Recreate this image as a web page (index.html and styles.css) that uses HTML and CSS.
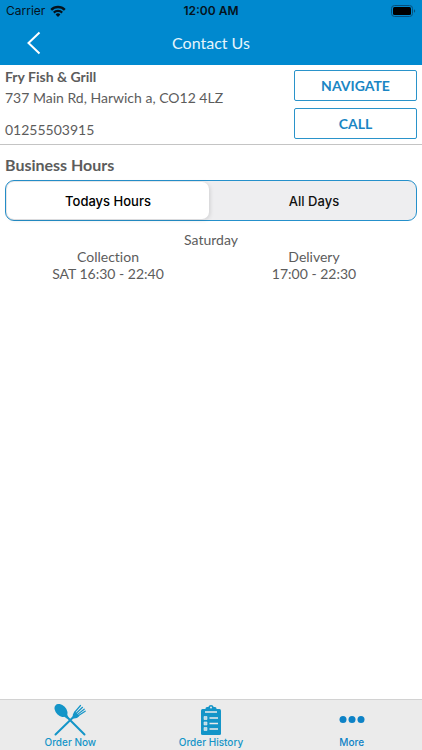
FILE: index.html
```html
<!DOCTYPE html>
<html lang="en">
<head>
<meta charset="utf-8">
<meta name="viewport" content="width=device-width, initial-scale=1">
<title>Contact Us</title>
<link rel="stylesheet" href="styles.css">
</head>
<body>
<header class="header">
  <div class="status">
    <span class="carrier">Carrier
      <svg class="wifi" viewBox="0 0 16 12" aria-hidden="true">
        <path d="M1.2 4.8a9.6 9.6 0 0 1 13.6 0" fill="none" stroke="currentColor" stroke-width="2.4"/>
        <path d="M3.8 7.6a6 6 0 0 1 8.4 0" fill="none" stroke="currentColor" stroke-width="2.2"/>
        <path d="M8 12 5.6 9.5a3.4 3.4 0 0 1 4.8 0z" fill="currentColor"/>
      </svg>
    </span>
    <time class="clock">12:00 AM</time>
    <svg class="battery" viewBox="0 0 25 12" aria-hidden="true">
      <rect x="0.5" y="0.5" width="21" height="11" rx="3" fill="none" stroke="#06507d"/>
      <rect x="2" y="2" width="18" height="8" rx="1.5" fill="#000"/>
      <path d="M23 4.2v3.6c1.6-.6 1.6-3 0-3.6z" fill="#06507d"/>
    </svg>
  </div>
  <div class="navbar">
    <button class="back" type="button" aria-label="Back">
      <svg viewBox="0 0 14 24" aria-hidden="true"><path d="M12.5 1.5 1.5 12l11 10.5" fill="none" stroke="currentColor" stroke-width="2"/></svg>
    </button>
    <h1 class="title">Contact Us</h1>
  </div>
</header>
<main class="content">
  <section class="contact">
    <address class="details">
      <strong class="name">Fry Fish &amp; Grill</strong>
      <span class="street">737 Main Rd, Harwich a, CO12 4LZ</span>
      <span class="phone">01255503915</span>
    </address>
    <div class="actions">
      <button class="action" type="button">NAVIGATE</button>
      <button class="action" type="button">CALL</button>
    </div>
  </section>
  <section class="hours">
    <h2 class="heading">Business Hours</h2>
    <div class="segmented">
      <button class="segment selected" type="button" aria-pressed="true">Todays Hours</button>
      <button class="segment" type="button" aria-pressed="false">All Days</button>
    </div>
    <p class="day">Saturday</p>
    <div class="times">
      <p class="time">Collection<br>SAT 16:30 - 22:40</p>
      <p class="time">Delivery<br>17:00 - 22:30</p>
    </div>
  </section>
</main>
<nav class="tabs">
  <a class="tab" href="#order">
    <svg class="icon" viewBox="0 0 32 32" aria-hidden="true">
      <g fill="none" stroke="currentColor" stroke-linecap="round">
        <path d="M11 11 30.500 30.500M1.500 30.500 22 10.500" stroke-width="2"/>
        <path d="m20.500 8.500 6-7M22.300 9.300l6.200-6M23.600 10.400l6.600-5.200M24.200 11.800l7-4.600" stroke-width="1.200"/>
      </g>
      <ellipse cx="7" cy="6.500" rx="7.600" ry="5.200" transform="rotate(45 7 6.500)" fill="currentColor"/>
      <path d="M10 12.500 12.700 9.500 14.500 13.500 13.200 14.700z" fill="currentColor"/>
      <path d="M20.800 7.600c-2 2-2.400 3.600-2 6.800 3 .2 4.600-.2 6.700-2.700z" fill="currentColor"/>
    </svg>
    <span>Order Now</span>
  </a>
  <a class="tab" href="#history">
    <svg class="icon" viewBox="0 0 32 32" aria-hidden="true">
      <rect x="6" y="5" width="20" height="26" rx="1.500" fill="currentColor"/>
      <path d="M10.500 8V4.500A1.500 1.500 0 0 1 12 3h1.300a2.800 2.800 0 0 1 5.400 0H20a1.500 1.500 0 0 1 1.500 1.500V8z" fill="currentColor"/>
      <circle cx="16" cy="3.500" r="1" fill="#ebebeb"/>
      <path d="M10 8h12M14.500 14H23M14.500 19.500H23M14.500 25H23" stroke="#ebebeb" stroke-width="1.300"/>
      <path d="M9 12.500h3v3H9zM9 18h3v3H9zM9 23.500h3v3H9z" fill="#b5dcea" stroke="#ebebeb" stroke-width=".6"/>
    </svg>
    <span>Order History</span>
  </a>
  <a class="tab more" href="#more">
    <svg class="icon" viewBox="0 0 32 32" aria-hidden="true">
      <g fill="currentColor"><circle cx="7" cy="15.500" r="3.500"/><circle cx="16" cy="15.500" r="3.500"/><circle cx="25" cy="15.500" r="3.500"/></g>
    </svg>
    <span>More</span>
  </a>
</nav>
</body>
</html>
```
FILE: styles.css
```css
* { box-sizing: border-box; }
body {
  display: flex;
  flex-direction: column;
  min-height: 100vh;
  margin: 0;
  background: #fff;
  color: #5c5c5c;
  font: 14px/17px Lato, sans-serif;
  font-variant-ligatures: none;
}
h1, h2, p { margin: 0; }
button { padding: 0; font: inherit; }
a { color: inherit; text-decoration: none; }

.header { background: #0089cf; padding-bottom: 1px; }
.status {
  display: grid;
  grid-template-columns: 1fr auto 1fr;
  align-items: center;
  height: 22px;
  padding: 0 6px;
  color: #05131d;
  font: 12px/22px Inter, sans-serif;
}
.carrier { display: flex; align-items: center; gap: 5px; }
.wifi { width: 16px; height: 12px; }
.clock { font-weight: 600; }
.battery { justify-self: end; width: 25px; height: 12px; }
.navbar {
  display: grid;
  grid-template-columns: 68px 1fr 68px;
  align-items: center;
  height: 42px;
}
.back {
  display: flex;
  align-items: center;
  justify-content: center;
  height: 40px;
  border: 0;
  background: none;
  color: #fff;
}
.back svg { width: 14px; height: 24px; }
.title { color: #e6f5fc; font-size: 16px; font-weight: 400; line-height: 20px; text-align: center; }

.content { flex: 1; }
.contact {
  display: flex;
  justify-content: space-between;
  padding: 3px 5px 5px;
  border-bottom: 1px solid #c4c4c4;
}
.details { display: flex; flex-direction: column; font-style: normal; }
.name { margin-bottom: 4px; }
.phone { margin-top: 15px; }
.actions { display: flex; flex-direction: column; gap: 7px; width: 123px; padding-top: 2px; }
.action {
  height: 31px;
  border: 1px solid #2a93ca;
  border-radius: 2px;
  background: #fff;
  color: #1a86c4;
  font-weight: 700;
}

.hours { padding: 10px 5px; }
.heading { font-size: 16px; line-height: 20px; }
.segmented {
  display: flex;
  gap: 4px;
  height: 41px;
  margin-top: 5px;
  padding: 1px;
  border: 1px solid #2590cb;
  border-radius: 9px;
  background: #eeeef0;
}
.segment {
  flex: 1;
  border: 0;
  border-radius: 7px;
  background: none;
  color: #111;
  font: 500 13px/16px Inter, sans-serif;
}
.selected { background: #fff; box-shadow: 1px 1px 4px #0002; color: #000; }
.day { margin-top: 10px; text-align: center; }
.times { display: grid; grid-template-columns: 1fr 1fr; text-align: center; }

.tabs {
  display: grid;
  grid-template-columns: repeat(3, 1fr);
  height: 51px;
  border-top: 1px solid #d2d2d2;
  background: #ebebeb;
  color: #1495c8;
  font: 500 10px/12px Inter, sans-serif;
}
.tab { display: flex; flex-direction: column; align-items: center; padding-top: 4px; }
.more { color: #0d82c6; }
.icon { width: 32px; height: 32px; }
```
